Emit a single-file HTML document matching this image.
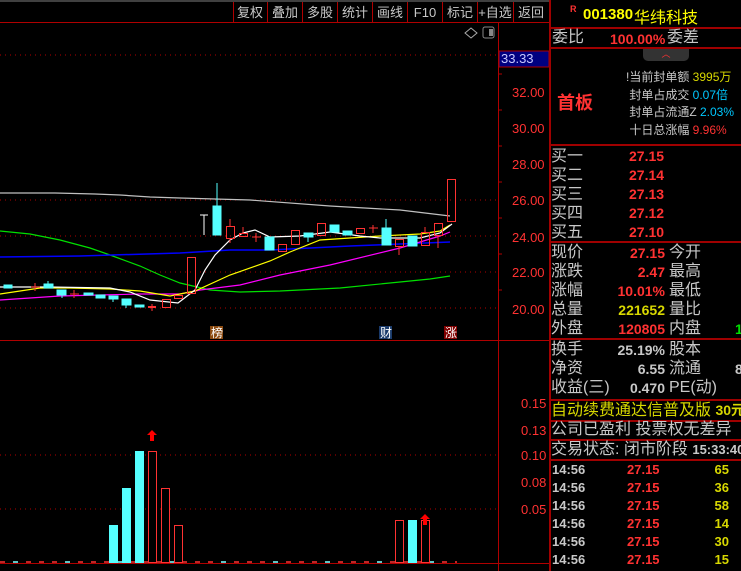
<!DOCTYPE html>
<html><head><meta charset="utf-8"><style>
*{margin:0;padding:0;box-sizing:border-box}
body{width:741px;height:571px;background:#000;overflow:hidden;position:relative;font-family:"Liberation Sans","Noto Sans CJK SC",sans-serif;color:#c8c8c8}
.a{position:absolute;white-space:nowrap}
.r{color:#ff3232}.y{color:#d8d800}.c{color:#00c8ff}.w{color:#c8c8c8}.g{color:#00e000}
.lbl{font-size:15px;line-height:18px}
.num{font-family:"Liberation Sans",sans-serif;font-weight:bold;font-size:14px;line-height:18px}
.hl{position:absolute;left:549px;width:192px;height:2px;background:#a00000}
</style></head><body>
<svg class="a" style="left:0;top:0" width="549" height="571">
<line x1="0" y1="1" x2="549" y2="1" stroke="#808080"/>
<line x1="0" y1="22.5" x2="549" y2="22.5" stroke="#b00000"/>
<g stroke="#b00000">
<line x1="233.5" y1="2" x2="233.5" y2="22"/><line x1="267.5" y1="2" x2="267.5" y2="22"/><line x1="302.5" y1="2" x2="302.5" y2="22"/><line x1="337.5" y1="2" x2="337.5" y2="22"/><line x1="372.5" y1="2" x2="372.5" y2="22"/><line x1="407.5" y1="2" x2="407.5" y2="22"/><line x1="442.5" y1="2" x2="442.5" y2="22"/><line x1="477.5" y1="2" x2="477.5" y2="22"/><line x1="513.5" y1="2" x2="513.5" y2="22"/>
</g>
<g font-size="13" fill="#c8c8c8" text-anchor="middle" font-family="Liberation Sans,Noto Sans CJK SC,sans-serif">
<text x="250" y="17">复权</text><text x="285" y="17">叠加</text><text x="320" y="17">多股</text><text x="355" y="17">统计</text><text x="390" y="17">画线</text><text x="425" y="17">F10</text><text x="460" y="17">标记</text><text x="495" y="17">+自选</text><text x="531" y="17">返回</text>
</g>
<line x1="498.5" y1="22" x2="498.5" y2="571" stroke="#b00000"/>
<line x1="0" y1="340.5" x2="549" y2="340.5" stroke="#b00000"/>
<line x1="0" y1="563.5" x2="549" y2="563.5" stroke="#b00000"/>
<path d="M465 33 l6 -5 6 5 -6 5z" fill="none" stroke="#aaa"/>
<rect x="483" y="27" width="11" height="11" rx="2" fill="none" stroke="#888"/><rect x="489" y="29" width="4" height="7" fill="#888"/>
<rect x="499" y="51" width="50" height="16" fill="#000080" stroke="#b00000"/>
<text x="501" y="63" font-size="13" fill="#c8c8ff" font-family="Liberation Sans">33.33</text>
<g stroke="#b00000" stroke-dasharray="1 4">
<line x1="0" y1="55" x2="498" y2="55"/><line x1="0" y1="200" x2="498" y2="200"/><line x1="0" y1="236" x2="498" y2="236"/><line x1="0" y1="272" x2="498" y2="272"/><line x1="0" y1="308" x2="498" y2="308"/>
<line x1="0" y1="455" x2="498" y2="455"/><line x1="0" y1="509" x2="498" y2="509"/>
</g>
<g fill="#ff3232" font-size="13" font-family="Liberation Sans">
<text x="512" y="97">32.00</text><text x="512" y="133">30.00</text><text x="512" y="169">28.00</text><text x="512" y="205">26.00</text><text x="512" y="242">24.00</text><text x="512" y="277">22.00</text><text x="512" y="314">20.00</text>
<text x="521" y="408">0.15</text><text x="521" y="435">0.13</text><text x="521" y="460">0.10</text><text x="521" y="487">0.08</text><text x="521" y="514">0.05</text>
</g>
<g stroke="#b00000"><line x1="498" y1="182" x2="502" y2="182"/><line x1="498" y1="218" x2="502" y2="218"/><line x1="498" y1="254" x2="502" y2="254"/><line x1="498" y1="290" x2="502" y2="290"/><line x1="498" y1="146" x2="502" y2="146"/><line x1="498" y1="110" x2="502" y2="110"/><line x1="498" y1="74" x2="502" y2="74"/></g>
<g fill="none" stroke-width="1.2">
<polyline stroke="#c0c0c0" points="0,193 55,193 95,194 120,195 150,197 180,198 250,200 330,206 400,210 450,216"/>
<polyline stroke="#00e000" points="0,231 30,234 60,240 90,248 110,255 140,266 160,275 180,283 210,290 240,292 280,291 340,288 400,282 430,279 450,276"/>
<polyline stroke="#0000ff" stroke-width="1.5" points="0,257 80,256 180,253 230,250 270,250 350,246 450,242"/>
<polyline stroke="#ff00ff" points="0,300 30,298 60,296 100,295 140,294 180,294 200,290 240,285 280,275 330,265 400,248 440,236 450,232"/>
<polyline stroke="#ffff00" points="0,294 40,288 70,288 110,289 140,291 170,296 195,291 230,275 270,261 290,252 320,240 380,236 420,234 440,231 450,225"/>
<polyline stroke="#ffffff" points="0,287 50,287 110,288 130,292 150,300 178,303 195,290 205,270 215,255 230,240 243,233 255,230 270,237 300,236 330,232 360,236 380,238 420,238 440,233 452,224"/>
</g>
<g fill="#55ffff" stroke="#55ffff">
<rect x="4" y="285" width="8" height="3"/><rect x="44" y="284" width="9" height="4"/><line x1="48" y1="281" x2="48" y2="284"/><rect x="57" y="290" width="9" height="5"/><line x1="62" y1="295" x2="62" y2="298"/>
<rect x="84" y="293" width="9" height="2"/><rect x="96" y="295" width="9" height="3"/><rect x="109" y="296" width="9" height="3"/><line x1="113" y1="299" x2="113" y2="302"/>
<rect x="122" y="299" width="9" height="6"/><line x1="126" y1="305" x2="126" y2="308"/><rect x="135" y="305" width="9" height="2"/>
<rect x="213" y="206" width="8" height="29"/><line x1="217" y1="183" x2="217" y2="206"/>
<rect x="265" y="237" width="9" height="13"/><rect x="304" y="233" width="9" height="4"/><line x1="308" y1="237" x2="308" y2="242"/>
<rect x="330" y="225" width="9" height="7"/><rect x="343" y="231" width="9" height="4"/><rect x="382" y="228" width="9" height="17"/><line x1="386" y1="219" x2="386" y2="228"/><rect x="408" y="236" width="9" height="10"/>
</g>
<g fill="none" stroke="#ff3232">
<line x1="31" y1="287" x2="40" y2="287"/><line x1="35" y1="283" x2="35" y2="291"/><line x1="70" y1="294" x2="79" y2="294"/><line x1="74" y1="290" x2="74" y2="298"/>
<line x1="148" y1="307" x2="156" y2="307" stroke-width="2"/><line x1="152" y1="304" x2="152" y2="311"/>
<rect x="162.5" y="299.5" width="8" height="8"/><rect x="174.5" y="295.5" width="8" height="3"/><rect x="187.5" y="257.5" width="8" height="36"/>
<rect x="226.5" y="226.5" width="8" height="12"/><line x1="230" y1="219" x2="230" y2="226"/><line x1="230" y1="238" x2="230" y2="243"/>
<rect x="239.5" y="233.5" width="8" height="3"/><line x1="243" y1="227" x2="243" y2="233"/>
<line x1="252" y1="237" x2="261" y2="237"/><line x1="256" y1="233" x2="256" y2="242"/>
<rect x="278.5" y="244.5" width="8" height="7"/><rect x="291.5" y="230.5" width="8" height="14"/><rect x="317.5" y="223.5" width="8" height="12"/>
<rect x="356.5" y="228.5" width="8" height="5"/><line x1="369" y1="228" x2="378" y2="228"/><line x1="373" y1="225" x2="373" y2="233"/>
<rect x="395.5" y="239.5" width="8" height="7"/><line x1="399" y1="246" x2="399" y2="255"/><rect x="421.5" y="232.5" width="8" height="13"/><line x1="425" y1="227" x2="425" y2="232"/>
<rect x="434.5" y="223.5" width="8" height="12"/><line x1="438" y1="235" x2="438" y2="248"/><rect x="447.5" y="179.5" width="8" height="42"/>
</g>
<line x1="204" y1="215" x2="204" y2="235" stroke="#fff"/><line x1="200" y1="215" x2="208" y2="215" stroke="#fff"/>
<rect x="210" y="326" width="13" height="13" fill="#8b4a10"/><text x="211" y="337" font-size="12" fill="#fff">榜</text>
<rect x="379" y="326" width="13" height="13" fill="#1a3a6a"/><text x="380" y="337" font-size="12" fill="#fff">财</text>
<rect x="444" y="326" width="13" height="13" fill="#800000"/><text x="445" y="337" font-size="12" fill="#fff">涨</text>
<line x1="0" y1="562" x2="457" y2="562" stroke="#ff3232" stroke-width="1.5" stroke-dasharray="5 8"/>
<line x1="0" y1="562" x2="457" y2="562" stroke="#55ffff" stroke-width="1.5" stroke-dasharray="5 47" stroke-dashoffset="-13"/>
<g fill="#55ffff"><rect x="109" y="525" width="9" height="38"/><rect x="122" y="488" width="9" height="75"/><rect x="135" y="451" width="9" height="112"/><rect x="408" y="520" width="9" height="43"/></g>
<g fill="#000" stroke="#ff3232"><rect x="148.5" y="451.5" width="8" height="111"/><rect x="161.5" y="488.5" width="8" height="74"/><rect x="174.5" y="525.5" width="8" height="37"/><rect x="395.5" y="520.5" width="8" height="42"/><rect x="421.5" y="520.5" width="8" height="42"/></g>
<g fill="#ff0000"><path d="M152 430 l-5 5 h3 v6 h4 v-6 h3z"/><path d="M425 514 l-5 5 h3 v6 h4 v-6 h3z"/></g>
</svg>
<div class="a" style="left:549px;top:0;width:2px;height:571px;background:#a00000"></div>
<div class="a" style="left:570px;top:4px;font-size:9px;font-weight:bold;color:#ff3232">R</div>
<div class="a" style="left:583px;top:6px;font-size:15px;font-weight:bold;color:#ffff00;font-family:'Liberation Sans',sans-serif">001380</div>
<div class="a" style="left:634px;top:4px;font-size:16px;color:#ffff00">华纬科技</div>
<div class="hl" style="top:27px"></div>
<div class="a lbl" style="left:552px;top:29px;font-size:16px">委比</div>
<div class="a num r" style="left:610px;top:30px">100.00%</div>
<div class="a lbl" style="left:667px;top:29px;font-size:16px">委差</div>
<div class="hl" style="top:47px"></div>
<div class="a" style="left:643px;top:49px;width:46px;height:12px;background:#333;border-radius:0 0 5px 5px;color:#ff3232;font-size:9px;text-align:center;line-height:10px">︿</div>
<div class="a" style="left:557px;top:89px;font-size:18px;font-weight:bold;color:#ff3232">首板</div>
<div class="a" style="left:626px;top:69px;font-size:12px;line-height:17.5px;color:#c8c8c8">
<div>!当前封单额 <span class="y">3995万</span></div>
<div>&nbsp;封单占成交 <span class="c">0.07倍</span></div>
<div>&nbsp;封单占流通Z <span class="c">2.03%</span></div>
<div>&nbsp;十日总涨幅 <span class="r">9.96%</span></div>
</div>
<div class="hl" style="top:144px"></div>
<div class="a lbl" style="left:551px;top:147px;line-height:19px;font-size:16px">买一<br>买二<br>买三<br>买四<br>买五</div>
<div class="a num r" style="left:629px;top:147px;line-height:19px">27.15<br>27.14<br>27.13<br>27.12<br>27.10</div>
<div class="hl" style="top:241px"></div>
<div class="a lbl" style="left:551px;top:243px;line-height:19px;font-size:16px">现价<br>涨跌<br>涨幅<br>总量<br>外盘</div>
<div class="a num" style="left:600px;top:244px;width:65px;text-align:right;line-height:19px"><span class="r">27.15</span><br><span class="r">2.47</span><br><span class="r">10.01%</span><br><span class="y">221652</span><br><span class="r">120805</span></div>
<div class="a lbl" style="left:669px;top:243px;line-height:19px;font-size:16px">今开<br>最高<br>最低<br>量比<br>内盘</div>
<div class="a num g" style="left:735px;top:320px">1</div>
<div class="hl" style="top:338px"></div>
<div class="a lbl" style="left:551px;top:340px;line-height:19px;font-size:16px">换手<br>净资<br>收益(三)</div>
<div class="a num w" style="left:600px;top:341px;width:65px;text-align:right;line-height:19px">25.19%<br>6.55<br>0.470</div>
<div class="a lbl" style="left:669px;top:340px;line-height:19px;font-size:16px">股本<br>流通<br>PE(动)</div>
<div class="a num w" style="left:735px;top:360px">8</div>
<div class="hl" style="top:399px"></div>
<div class="a lbl y" style="left:551px;top:401px;font-size:16px">自动续费通达信普及版 <b style="font-size:14px">30元</b></div>
<div class="hl" style="top:420px"></div>
<div class="a lbl" style="left:551px;top:421px;font-size:16px">公司已盈利 投票权无差异</div>
<div class="hl" style="top:439px"></div>
<div class="a lbl" style="left:551px;top:441px;font-size:16px">交易状态: 闭市阶段 <b style="font-size:13px">15:33:40</b></div>
<div class="hl" style="top:459px"></div>
<div class="a num w" style="left:552px;top:461px;line-height:18px;font-size:13px">14:56<br>14:56<br>14:56<br>14:56<br>14:56<br>14:56</div>
<div class="a num r" style="left:627px;top:461px;line-height:18px;font-size:13px">27.15<br>27.15<br>27.15<br>27.15<br>27.15<br>27.15</div>
<div class="a num y" style="left:700px;top:461px;width:29px;text-align:right;line-height:18px;font-size:13px">65<br>36<br>58<br>14<br>30<br>15</div>
</body></html>
